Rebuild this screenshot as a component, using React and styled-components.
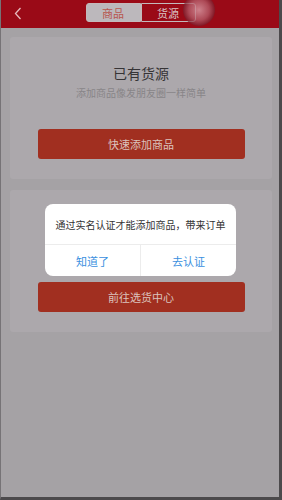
import styled, { createGlobalStyle } from "styled-components";

const Global = createGlobalStyle`
  html, body {
    margin: 0;
    padding: 0;
    background: #4c4a4c;
  }
  body {
    font-family: "Noto Sans CJK SC", "Noto Sans", sans-serif;
  }
`;

const Frame = styled.div`
  position: relative;
  width: 282px;
  height: 500px;
  box-sizing: border-box;
  border-left: 1px solid #767376;
  border-right: 3px solid #4c4a4c;
  border-bottom: 3px solid #4c4a4c;
  background: #a5a2a5;
  display: flex;
  flex-direction: column;
  overflow: hidden;
`;

const Header = styled.div`
  position: relative;
  height: 28px;
  flex-shrink: 0;
  background: #9a0a17;
  display: flex;
  align-items: center;
  justify-content: center;
`;

const Back = styled.svg`
  position: absolute;
  left: 13px;
  top: 7px;
`;

const Segment = styled.div`
  display: flex;
  margin-top: -3px;
  margin-left: 1px;
`;

const Tab = styled.div`
  width: 55px;
  height: 19px;
  box-sizing: border-box;
  display: flex;
  align-items: center;
  justify-content: center;
  font-size: 11px;
  color: ${(p) => (p.$active ? "#b8564e" : "#d9c3c5")};
  background: ${(p) => (p.$active ? "#bcb8bc" : "#9a0a17")};
  border: 1px solid #c4b9bb;
  border-radius: ${(p) => (p.$left ? "3px 0 0 3px" : "0 3px 3px 0")};
`;

const Ripple = styled.div`
  position: absolute;
  left: 182px;
  top: -6px;
  width: 32px;
  height: 32px;
  border-radius: 50%;
  background: radial-gradient(
    circle,
    rgba(214, 150, 160, 0.85) 0%,
    rgba(180, 95, 108, 0.75) 45%,
    rgba(100, 10, 24, 0.7) 78%,
    rgba(100, 10, 24, 0) 100%
  );
`;

const Body = styled.div`
  display: flex;
  flex-direction: column;
  gap: 11px;
  padding: 9px 7px 0 9px;
`;

const Card = styled.div`
  height: 142px;
  background: #aca8ac;
  border-radius: 3px;
  display: flex;
  flex-direction: column;
  align-items: center;
  padding-top: 27px;
  box-sizing: border-box;
`;

const Title = styled.div`
  font-size: 14px;
  line-height: 18px;
  color: #363436;
`;

const Sub = styled.div`
  margin-top: 4px;
  font-size: 10px;
  line-height: 14px;
  color: #888588;
`;

const Spacer = styled.div`
  height: 36px;
`;

const Action = styled.div`
  margin-top: 29px;
  width: 207px;
  height: 30px;
  border-radius: 3px;
  background: #a12f20;
  color: #dcc3bd;
  font-size: 11px;
  display: flex;
  align-items: center;
  justify-content: center;
`;

const Dialog = styled.div`
  position: absolute;
  left: 44px;
  top: 204px;
  width: 191px;
  background: #fff;
  border-radius: 8px;
  overflow: hidden;
`;

const Message = styled.div`
  height: 40px;
  display: flex;
  align-items: center;
  justify-content: center;
  font-size: 10px;
  color: #333;
  border-bottom: 1px solid #ececec;
`;

const Buttons = styled.div`
  display: flex;
  height: 31px;
`;

const DialogButton = styled.div`
  flex: 1;
  display: flex;
  align-items: center;
  justify-content: center;
  font-size: 11px;
  color: #3a8fe0;
  & + & {
    border-left: 1px solid #ececec;
  }
`;

export default function App() {
  return (
    <>
      <Global />
      <Frame>
        <Header>
          <Back width="8" height="13" viewBox="0 0 8 13">
            <path d="M6.5 1 L1.5 6.5 L6.5 12" fill="none" stroke="#e6b9bd" strokeWidth="1.3" />
          </Back>
          <Segment>
            <Tab $active $left>商品</Tab>
            <Tab>货源</Tab>
          </Segment>
          <Ripple />
        </Header>
        <Body>
          <Card>
            <Title>已有货源</Title>
            <Sub>添加商品像发朋友圈一样简单</Sub>
            <Action>快速添加商品</Action>
          </Card>
          <Card>
            <Spacer />
            <Action>前往选货中心</Action>
          </Card>
        </Body>
        <Dialog>
          <Message>通过实名认证才能添加商品，带来订单</Message>
          <Buttons>
            <DialogButton>知道了</DialogButton>
            <DialogButton>去认证</DialogButton>
          </Buttons>
        </Dialog>
      </Frame>
    </>
  );
}
